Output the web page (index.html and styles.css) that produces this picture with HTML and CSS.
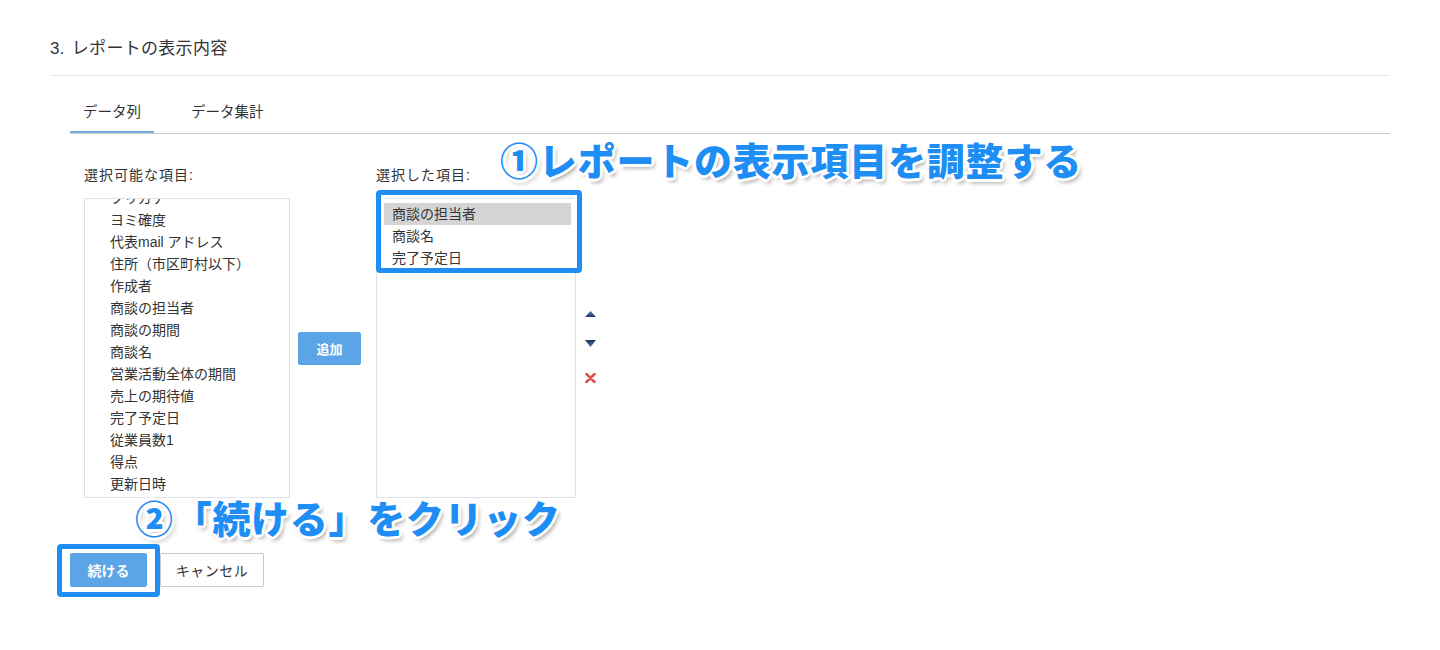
FILE: index.html
```html
<!DOCTYPE html>
<html lang="ja">
<head>
<meta charset="utf-8">
<title>レポートの表示内容</title>
<link rel="stylesheet" href="styles.css">
</head>
<body>
<div class="page">
  <div class="section-head">
    <h2 class="section-title">3. レポートの表示内容</h2>
  </div>
  <div class="content">
    <div class="tabs">
      <div class="tab active">データ列</div>
      <div class="tab">データ集計</div>
    </div>
    <div class="panel">
      <div class="label">選択可能な項目:</div>
      <div class="label label-right">選択した項目:</div>
      <div class="listbox listbox-left">
        <ul class="items items-scrolled">
          <li>フリガナ</li>
          <li>ヨミ確度</li>
          <li>代表mail アドレス</li>
          <li>住所（市区町村以下）</li>
          <li>作成者</li>
          <li>商談の担当者</li>
          <li>商談の期間</li>
          <li>商談名</li>
          <li>営業活動全体の期間</li>
          <li>売上の期待値</li>
          <li>完了予定日</li>
          <li>従業員数1</li>
          <li>得点</li>
          <li>更新日時</li>
        </ul>
      </div>
      <button class="btn btn-primary btn-add">追加</button>
      <div class="listbox listbox-right">
        <ul class="items items-selected">
          <li class="selected">商談の担当者</li>
          <li>商談名</li>
          <li>完了予定日</li>
        </ul>
      </div>
      <div class="controls">
        <svg class="ctl-up" width="11" height="6" viewBox="0 0 11 6"><defs><linearGradient id="g1" x1="0" y1="0" x2="0" y2="1"><stop offset="0" stop-color="#5a7fa8"/><stop offset="1" stop-color="#1d3a5e"/></linearGradient></defs><polygon points="5.5,0 11,6 0,6" fill="url(#g1)"/></svg>
        <svg class="ctl-down" width="11" height="7" viewBox="0 0 11 7"><defs><linearGradient id="g2" x1="0" y1="0" x2="0" y2="1"><stop offset="0" stop-color="#1d3a5e"/><stop offset="1" stop-color="#4a6f98"/></linearGradient></defs><polygon points="0,0 11,0 5.5,7" fill="url(#g2)"/></svg>
        <svg class="ctl-del" width="11" height="10" viewBox="0 0 11 10"><path d="M1.5 1 L9.5 9 M9.5 1 L1.5 9" stroke="#d9534f" stroke-width="2.6" stroke-linecap="round"/></svg>
      </div>
    </div>
    <div class="actions">
      <button class="btn btn-primary btn-continue">続ける</button>
      <button class="btn btn-default btn-cancel">キャンセル</button>
    </div>
  </div>
</div>

<div class="highlight highlight-selected"></div>
<div class="highlight highlight-continue"></div>
<div class="callout callout-1">①レポートの表示項目を調整する</div>
<div class="callout callout-2">②「続ける」をクリック</div>
</body>
</html>
```

FILE: styles.css
```css
html, body {
  margin: 0;
  padding: 0;
  background: #ffffff;
}
body {
  position: relative;
  width: 1440px;
  height: 650px;
  overflow: hidden;
  font-family: "Liberation Sans", "Noto Sans CJK JP", sans-serif;
  color: #333333;
}
.page {
  margin-left: 50px;
  width: 1340px;
}
.section-head {
  padding-top: 39px;
  padding-bottom: 16px;
  border-bottom: 1px solid #e6e6e6;
}
.section-title {
  margin: 0;
  font-size: 17px;
  line-height: 20px;
  font-weight: normal;
  color: #333333;
  word-spacing: 2px;
  letter-spacing: 0.3px;
}
.content {
  margin-left: 20px;
}
.tabs {
  display: flex;
  gap: 24px;
  border-bottom: 1px solid #cccccc;
}
.tab {
  padding: 26px 13px 11px;
  font-size: 14.5px;
  line-height: 20px;
  color: #333333;
}
.tab.active {
  box-shadow: inset 0 -2px 0 #7aaedc;
}
.panel {
  margin-top: 31px;
  margin-left: 14px;
  display: grid;
  grid-template-columns: 206px 86px 200px auto;
  grid-template-rows: 20px 300px;
  row-gap: 13px;
}
.label {
  font-size: 14px;
  line-height: 20px;
  letter-spacing: 1px;
  grid-row: 1;
  grid-column: 1;
}
.label-right {
  grid-column: 3;
}
.listbox {
  grid-row: 2;
  box-sizing: border-box;
  height: 300px;
  border: 1px solid #dde1e8;
  overflow: hidden;
  background: #fff;
}
.listbox-left {
  grid-column: 1;
}
.listbox-right {
  grid-column: 3;
  padding: 4px 4px 0 7px;
}
.items {
  list-style: none;
  margin: 0;
  padding: 0;
  font-size: 14px;
}
.items li {
  height: 22px;
  line-height: 22px;
  white-space: nowrap;
}
.items-scrolled {
  margin-top: -12px;
}
.items-scrolled li {
  padding-left: 25px;
}
.items-selected li {
  padding-left: 8px;
}
.items-selected li.selected {
  background: #d4d4d4;
}
.btn {
  font-family: "Liberation Sans", "Noto Sans CJK JP", sans-serif;
  box-sizing: border-box;
  border-radius: 2px;
  padding: 0;
  cursor: pointer;
}
.btn-primary {
  background: #5ba5e6;
  border: 1px solid #5ba5e6;
  color: #ffffff;
  font-weight: bold;
}
.btn-default {
  background: #ffffff;
  border: 1px solid #c8c8c8;
  color: #333333;
}
.btn-add {
  grid-row: 2;
  grid-column: 2;
  align-self: center;
  justify-self: start;
  margin-left: 8px;
  width: 63px;
  height: 33px;
  font-size: 13px;
}
.controls {
  grid-row: 2;
  grid-column: 4;
  align-self: start;
  margin-left: 9px;
  padding-top: 113px;
  width: 11px;
  display: flex;
  flex-direction: column;
  align-items: center;
}
.ctl-up { display: block; }
.ctl-down { display: block; margin-top: 23px; }
.ctl-del { display: block; margin-top: 26px; }
.actions {
  margin-top: 55px;
  display: flex;
  gap: 13px;
}
.btn-continue {
  width: 77px;
  height: 34px;
  font-size: 14px;
}
.btn-cancel {
  width: 104px;
  height: 34px;
  font-size: 14px;
  letter-spacing: 0.5px;
}

/* annotation overlays */
.highlight {
  position: absolute;
  box-sizing: border-box;
  border: 5px solid #1e8ef5;
  border-radius: 4px;
  box-shadow: inset 0 0 0 3px #ffffff;
}
.highlight-selected {
  left: 376px;
  top: 190px;
  width: 206px;
  height: 83px;
}
.highlight-continue {
  left: 57px;
  top: 544px;
  width: 103px;
  height: 53px;
}
.callout {
  position: absolute;
  font-family: "Noto Sans CJK JP", sans-serif;
  font-weight: 900;
  font-size: 38px;
  line-height: 38px;
  color: #1e8ef5;
  white-space: nowrap;
  text-shadow:
    3px 0 0 #fff, -3px 0 0 #fff, 0 3px 0 #fff, 0 -3px 0 #fff,
    2px 2px 0 #fff, -2px 2px 0 #fff, 2px -2px 0 #fff, -2px -2px 0 #fff,
    3px 4px 4px rgba(0, 0, 0, 0.35);
}
.callout-1 {
  left: 500px;
  top: 140px;
  letter-spacing: 0.8px;
}
.callout-2 {
  left: 135px;
  top: 498px;
  letter-spacing: 0.7px;
}
```
